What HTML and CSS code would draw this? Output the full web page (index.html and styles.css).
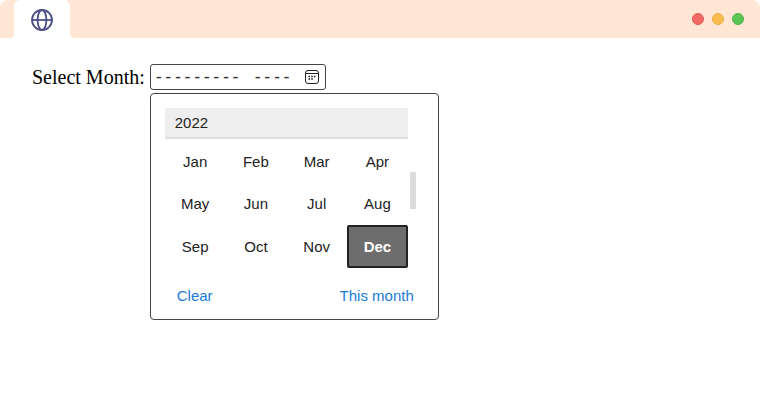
FILE: index.html
```html
<!DOCTYPE html>
<html>
  <head>
    <title>Select Month</title>
    <link rel="stylesheet" href="styles.css">
  </head>
  <body>
    <div class="browser-bar">
      <div class="browser-tab">
        <svg class="globe-icon" width="24" height="24" viewBox="0 0 24 24" fill="none" stroke="#4b4f85" stroke-width="1.8">
          <circle cx="12" cy="12" r="10"/>
          <ellipse cx="12" cy="12" rx="4.4" ry="10"/>
          <path d="M2 12h20"/>
        </svg>
      </div>
      <div class="window-buttons">
        <span class="window-button red"></span>
        <span class="window-button yellow"></span>
        <span class="window-button green"></span>
      </div>
    </div>

    <div class="content">
      <label class="month-label">Select Month:</label>
      <div class="month-field">
        <div class="month-input">
          <span class="month-mask">--------- ----</span>
          <svg class="calendar-icon" width="14" height="14" viewBox="0 0 14 14" fill="none" stroke="#222" stroke-width="1">
            <rect x="0.5" y="0.5" width="13" height="13" rx="2.5"/>
            <path d="M1 3.5h12"/>
            <path d="M3.5 6.5h1.6M6.2 6.5h1.6M8.9 6.5h1.6M3.5 9h1.6M6.2 9h1.6" stroke-width="1.4"/>
          </svg>
        </div>

        <div class="month-panel">
          <div class="year-header">2022</div>
          <div class="month-grid">
            <div class="month-cell">Jan</div>
            <div class="month-cell">Feb</div>
            <div class="month-cell">Mar</div>
            <div class="month-cell">Apr</div>
            <div class="month-cell">May</div>
            <div class="month-cell">Jun</div>
            <div class="month-cell">Jul</div>
            <div class="month-cell">Aug</div>
            <div class="month-cell">Sep</div>
            <div class="month-cell">Oct</div>
            <div class="month-cell">Nov</div>
            <div class="month-cell selected">Dec</div>
          </div>
          <div class="panel-footer">
            <span class="panel-link">Clear</span>
            <span class="panel-link">This month</span>
          </div>
          <div class="scroll-thumb"></div>
        </div>
      </div>
    </div>
  </body>
</html>
```

FILE: styles.css
```css
body {
  margin: 0;
  background-color: #fff;
}

.browser-bar {
  display: flex;
  justify-content: space-between;
  align-items: center;
  height: 38px;
  padding: 0 16px 0 14px;
  background-color: #ffe6d5;
  border-radius: 8px 8px 0 0;
}

.browser-tab {
  position: relative;
  display: flex;
  justify-content: center;
  align-items: flex-start;
  align-self: stretch;
  width: 56px;
  padding-top: 8px;
  box-sizing: border-box;
  background-color: #fff;
  border-radius: 6px 6px 0 0;
}

/* small inverted corners where the tab meets the page */
.browser-tab::before,
.browser-tab::after {
  content: "";
  position: absolute;
  bottom: 0;
  width: 4px;
  height: 4px;
}

.browser-tab::before {
  left: -4px;
  background: radial-gradient(circle at 0 0, #ffe6d5 3.6px, #fff 4.4px);
}

.browser-tab::after {
  right: -4px;
  background: radial-gradient(circle at 100% 0, #ffe6d5 3.6px, #fff 4.4px);
}

.window-buttons {
  display: flex;
  gap: 8px;
}

.window-button {
  width: 12px;
  height: 12px;
  border-radius: 50%;
  box-sizing: border-box;
  border: 1px solid;
}

.window-button.red {
  background-color: #f26a63;
  border-color: #de5a55;
}

.window-button.yellow {
  background-color: #f9bd4d;
  border-color: #e8ad45;
}

.window-button.green {
  background-color: #5ac454;
  border-color: #50b04b;
}

.content {
  display: flex;
  align-items: flex-start;
  padding: 26px 0 0 32px;
}

.month-label {
  margin-right: 5px;
  font-family: "Liberation Serif", serif;
  font-size: 20px;
  line-height: 26px;
  color: #000;
}

.month-field {
  display: flex;
  flex-direction: column;
  align-items: flex-start;
  gap: 3px;
}

.month-input {
  display: flex;
  justify-content: space-between;
  align-items: center;
  width: 176px;
  height: 26px;
  padding: 0 6px 0 5px;
  box-sizing: border-box;
  border: 1px solid #444;
  border-radius: 3px;
}

.month-mask {
  font-family: "Liberation Sans", sans-serif;
  font-size: 18px;
  letter-spacing: 3.6px;
  word-spacing: 4px;
  white-space: pre;
  color: #333;
}

.calendar-icon {
  flex-shrink: 0;
}

.month-panel {
  position: relative;
  width: 289px;
  height: 227px;
  padding: 14px 30px 0 14px;
  box-sizing: border-box;
  background-color: #fff;
  border: 1px solid #444;
  border-radius: 4px;
  font-family: "Liberation Sans", sans-serif;
  font-size: 15px;
  color: #222;
}

.year-header {
  height: 31px;
  padding-left: 10px;
  box-sizing: border-box;
  line-height: 29px;
  background-color: #eee;
  border-bottom: 2px solid #ddd;
}

.month-grid {
  display: grid;
  grid-template-columns: repeat(4, 1fr);
  grid-auto-rows: 42.5px;
  margin-top: 1px;
}

.month-cell {
  display: flex;
  justify-content: center;
  align-items: center;
}

.month-cell.selected {
  box-sizing: border-box;
  background-color: #6d6d6d;
  border: 2px solid #222;
  border-radius: 2px;
  font-weight: bold;
  color: #fff;
}

.panel-footer {
  display: flex;
  justify-content: space-between;
  margin: 19px -6px 0 12px;
}

.panel-link {
  color: #1a7bd8;
}

.scroll-thumb {
  position: absolute;
  top: 78px;
  left: 259px;
  width: 6px;
  height: 37px;
  background-color: #ddd;
}
```
